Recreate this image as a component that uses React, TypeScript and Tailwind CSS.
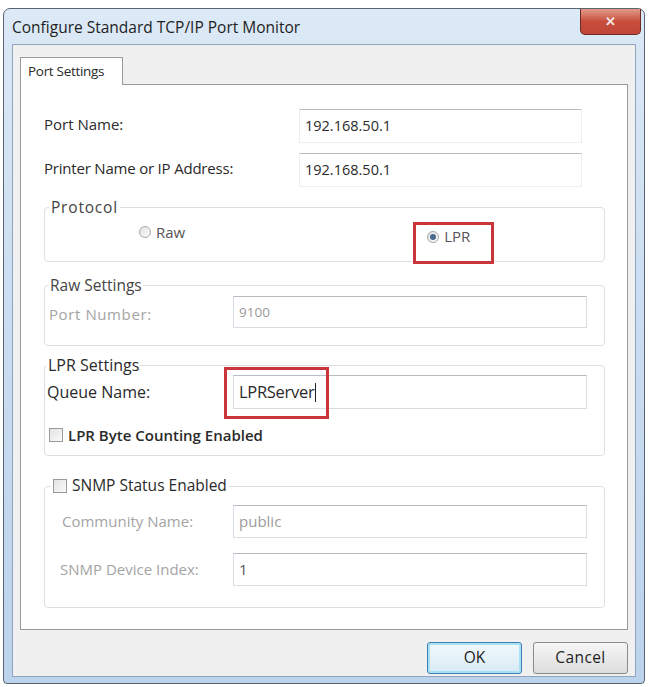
import React from "react";

const font = { fontFamily: '"Open Sans", "Noto Sans", "Liberation Sans", sans-serif' };

function Field({
  value,
  disabled,
  className = "",
  children,
}: {
  value: string;
  disabled?: boolean;
  className?: string;
  children?: React.ReactNode;
}) {
  return (
    <div
      className={`flex items-center px-[5px] bg-white border border-[#d9dde3] border-t-[#b9bcc2] ${
        disabled ? "text-[#9a9a9a]" : "text-[#2a2a2a]"
      } ${className}`}
    >
      {value}
      {children}
    </div>
  );
}

function Check({ label, bold }: { label: string; bold?: boolean }) {
  return (
    <span className="inline-flex items-center gap-[5px]">
      <span className="w-[14px] h-[14px] border border-[#9a9a9a] bg-gradient-to-br from-[#e3e3e3] to-[#fafafa]" />
      <span className={bold ? "font-semibold text-[#2a2a2a]" : "text-[#2a2a2a]"}>{label}</span>
    </span>
  );
}

function Radio({ label, checked }: { label: string; checked?: boolean }) {
  return (
    <span className="inline-flex items-center gap-[5px]">
      <span className="w-[12px] h-[12px] rounded-full border border-[#a7a7a7] bg-gradient-to-br from-[#e2e2e2] to-[#fbfbfb] flex items-center justify-center">
        {checked ? <span className="w-[6px] h-[6px] rounded-full bg-[#4a6a8c]" /> : null}
      </span>
      <span className="text-[#555]">{label}</span>
    </span>
  );
}

export default function App() {
  return (
    <div className="w-[648px] h-[687px] bg-white pt-[8px] px-[3px] text-[15px]" style={font}>
      {/* window frame */}
      <div className="relative h-[676px] rounded-t-[7px] rounded-b-[4px] border border-[#5a6470] bg-gradient-to-b from-[#dce9f6] via-[#c9dcf1] to-[#bcd3ec] flex flex-col">
        {/* title bar */}
        <div className="h-[35px] flex items-start justify-between">
          <div className="pl-[8px] pt-[8px] text-[15.5px] text-[#1e1e1e] leading-[20px]">
            Configure Standard TCP/IP Port Monitor
          </div>
          <div className="mr-[3px] w-[61px] h-[26px] rounded-b-[5px] border border-[#6e2b24] border-t-0 bg-gradient-to-b from-[#e29a8a] via-[#c84d3c] to-[#c0463a] flex items-center justify-center text-[#f3e6e4] text-[13px] font-bold">
            ✕
          </div>
        </div>

        {/* client area */}
        <div className="mx-[8px] mb-[6px] flex-1 border border-[#8fa5c0] bg-[#f0f0f0] flex flex-col">
          {/* tab strip */}
          <div className="pt-[12px] pl-[7px] flex">
            <div className="h-[28px] w-[103px] px-[7px] pt-[3px] border border-[#9a9a9a] border-b-0 bg-white text-[13.5px] tracking-[-0.3px] text-[#2a2a2a] -mb-px relative z-10">
              Port Settings
            </div>
          </div>

          {/* tab panel */}
          <div className="mx-[7px] h-[546px] border border-[#9a9a9a] bg-white pl-[23px] pr-[22px] pt-[24px]">
            <div className="flex items-center h-[34px]">
              <span className="w-[255px] text-[#2a2a2a] -mt-[3px]">Port Name:</span>
              <Field value="192.168.50.1" className="w-[283px] h-[34px] text-[14.5px] border-x-[#eeeeee] border-b-[#eeeeee]" />
            </div>
            <div className="flex items-center h-[34px] mt-[10px]">
              <span className="w-[255px] text-[#2a2a2a] tracking-[-0.2px] -mt-[3px]">Printer Name or IP Address:</span>
              <Field value="192.168.50.1" className="w-[283px] h-[34px] text-[14.5px] border-x-[#eeeeee] border-b-[#eeeeee]" />
            </div>

            {/* Protocol */}
            <fieldset className="mt-[9px] h-[66px] border border-[#dcdfe3] rounded-[4px] px-[4px]">
              <legend className="px-[2px] text-[#444] text-[15.5px] tracking-[0.8px]">Protocol</legend>
              <div className="flex h-[26px] items-center">
                <span className="ml-[90px]">
                  <Radio label="Raw" />
                </span>
                <span className="ml-[242px] mt-[6px]">
                  <Radio label="LPR" checked />
                </span>
              </div>
            </fieldset>

            {/* Raw Settings */}
            <fieldset className="mt-[12px] h-[72px] border border-[#dcdfe3] rounded-[4px] px-[4px]">
              <legend className="px-[1px] text-[#444] text-[15.5px]">Raw Settings</legend>
              <div className="flex items-center h-[50px] -mt-[10px]">
                <span className="w-[184px] text-[#a4a4a4] tracking-[0.6px] mt-[4px]">Port Number:</span>
                <Field value="9100" disabled className="w-[354px] h-[32px] text-[13.5px]" />
              </div>
            </fieldset>

            {/* LPR Settings */}
            <fieldset className="mt-[7px] h-[103px] border border-[#dcdfe3] rounded-[4px] px-[2px]">
              <legend className="px-[1px] text-[#2a2a2a] text-[16px]">LPR Settings</legend>
              <div className="flex items-center h-[34px] -mt-[2px]">
                <span className="w-[186px] text-[#2a2a2a] text-[16px]">Queue Name:</span>
                <Field value="LPRServer" className="w-[354px] h-[34px] border-[#a8b8c8] text-[16.5px] text-[#1a1a1a] tracking-[-0.3px]">
                  <span className="w-px h-[19px] bg-[#222] ml-[1px]" />
                </Field>
              </div>
              <div className="mt-[15px] pl-[2px] text-[15px]">
                <Check label="LPR Byte Counting Enabled" bold />
              </div>
            </fieldset>

            {/* SNMP */}
            <fieldset className="mt-[18px] h-[134px] border border-[#dcdfe3] rounded-[4px] px-[4px]">
              <legend className="px-[2px] ml-[2px] text-[15.5px]">
                <Check label="SNMP Status Enabled" />
              </legend>
              <div className="flex items-center h-[33px] mt-[6px]">
                <span className="w-[184px] pl-[13px] text-[#a4a4a4]">Community Name:</span>
                <Field value="public" disabled className="w-[354px] h-[33px] text-[15px]" />
              </div>
              <div className="flex items-center h-[33px] mt-[15px]">
                <span className="w-[184px] pl-[11px] text-[#a4a4a4]">SNMP Device Index:</span>
                <Field value="1" disabled className="w-[354px] h-[33px] text-[#555] text-[15px]" />
              </div>
            </fieldset>
          </div>

          {/* buttons */}
          <div className="flex justify-end gap-[11px] pr-[7px] pt-[12px] text-[15.5px]">
            <div className="w-[95px] h-[32px] rounded-[3px] border border-[#3c7fb1] shadow-[inset_0_0_0_2px_#a8e0f5] bg-gradient-to-b from-[#f2f8fc] to-[#d7ebf6] flex items-center justify-center text-[#1e1e1e]">
              OK
            </div>
            <div className="w-[95px] h-[32px] rounded-[3px] border border-[#8a8a8a] bg-gradient-to-b from-[#f6f6f6] to-[#dddddd] flex items-center justify-center text-[#1e1e1e] tracking-[0.4px]">
              Cancel
            </div>
          </div>
        </div>

        {/* annotation boxes */}
        <div className="absolute left-[409px] top-[213px] w-[81px] h-[42px] border-[3px] border-[#c9353b]" />
        <div className="absolute left-[220px] top-[358px] w-[105px] h-[52px] border-[3px] border-[#c9353b]" />
      </div>
    </div>
  );
}
